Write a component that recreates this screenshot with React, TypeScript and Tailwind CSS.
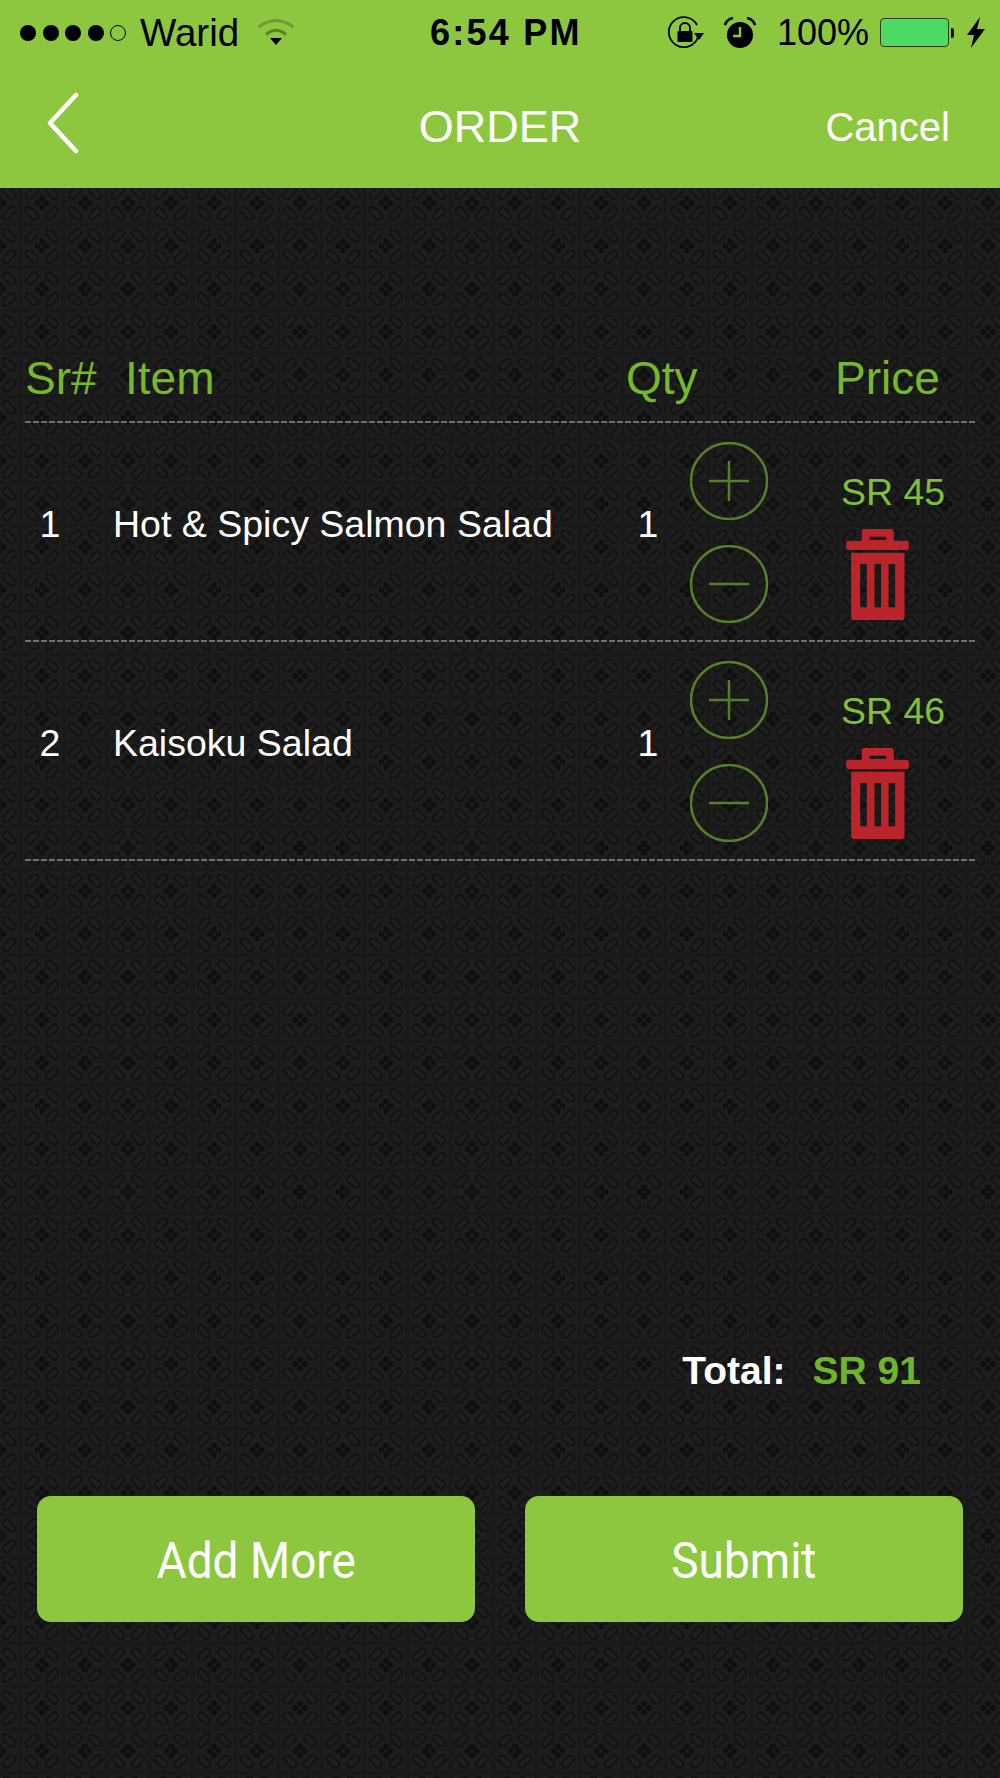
import React from 'react';

const items = [
  { sr: 1, name: 'Hot & Spicy Salmon Salad', qty: 1, price: 'SR 45' },
  { sr: 2, name: 'Kaisoku Salad', qty: 1, price: 'SR 46' },
];

const Dashed = () => (
  <div className="h-[2px] bg-[repeating-linear-gradient(90deg,#6e6e6e_0_6px,transparent_6px_8px)]" />
);

const capsules = [
  { x: 11.5, y: 11, r: 45 },
  { x: 31.5, y: 11, r: -45 },
  { x: 11.5, y: 32, r: -45 },
  { x: 31.5, y: 32, r: 45 },
];

// dark lattice behind the content, one 43px tile repeated
const Pattern = () => (
  <svg className="absolute inset-0 w-full h-full" aria-hidden="true">
    <defs>
      <pattern id="lattice" x="20.5" y="36.5" width="43" height="43" patternUnits="userSpaceOnUse">
        <rect width="43" height="43" fill="#1d1d1d" />
        <path d="M0 0H43M0 43H43M0 0V43M43 0V43" stroke="#131313" strokeWidth="3" fill="none" />
        <path d="M0 0H43M0 43H43M0 0V43M43 0V43" stroke="#1e1e1e" strokeWidth="1" fill="none" />
        <g fill="#0f0f0f">
          <circle cx="21.5" cy="17" r="3" />
          <circle cx="21.5" cy="26" r="3" />
          <circle cx="17" cy="21.5" r="3" />
          <circle cx="26" cy="21.5" r="3" />
        </g>
        {capsules.map((c) => (
          <rect
            key={`${c.x}-${c.y}`}
            x={c.x - 3.5}
            y={c.y - 7.5}
            width="7"
            height="15"
            rx="3.5"
            fill="#1e1e1e"
            stroke="#111111"
            strokeWidth="2"
            transform={`rotate(${c.r} ${c.x} ${c.y})`}
          />
        ))}
      </pattern>
    </defs>
    <rect width="100%" height="100%" fill="url(#lattice)" />
  </svg>
);

const Trash = () => (
  <svg viewBox="620 327 188 273" className="w-[63px] h-[91px] block" fill="#b9252b">
    <path
      fillRule="evenodd"
      d="M675 327H755Q763 327 763 335V362H801Q808 362 808 369V383Q808 390 801 390H627Q620 390 620 383V369Q620 362 627 362H667V335Q667 327 675 327ZM690 350V360H740V350Z"
    />
    <path
      fillRule="evenodd"
      d="M635 398H795V590Q795 600 785 600H645Q635 600 635 590ZM662 432V562H682V432ZM705 432V562H725V432ZM747 432V562H767V432Z"
    />
  </svg>
);

const RoundButton = ({ minus }: { minus?: boolean }) => (
  <svg viewBox="0 0 78 78" className="w-[78px] h-[78px] block" fill="none" stroke="#55802a">
    <circle cx="39" cy="39" r="38" strokeWidth="2.5" />
    <path d={minus ? 'M19 39H59' : 'M19 39H59M39 19V59'} strokeWidth="2.5" />
  </svg>
);

const StatusBar = () => (
  <div className="h-[62px] flex items-center pl-[20px] pr-[15px] pt-[3px] text-black">
    <div className="flex items-center gap-[6.5px]">
      <span className="w-[16px] h-[16px] rounded-full bg-black" />
      <span className="w-[16px] h-[16px] rounded-full bg-black" />
      <span className="w-[16px] h-[16px] rounded-full bg-black" />
      <span className="w-[16px] h-[16px] rounded-full bg-black" />
      <span className="w-[16px] h-[16px] rounded-full border-[1.5px] border-black" />
    </div>
    <span className="ml-[14px] text-[38.5px] leading-[44px]">Warid</span>
    <svg viewBox="0 0 38 28" className="ml-[18px] mb-[4px] w-[38px] h-[28px]" fill="none" strokeWidth="3">
      <path d="M1.5 10Q19 -3 36.5 10" stroke="#6f9a33" />
      <path d="M9 17.5Q19 9 29 17.5" stroke="#5c8029" />
      <path d="M13 21H25L19 28Z" fill="#000" />
    </svg>
    <span className="ml-[135px] text-[36px] leading-[44px] font-bold tracking-[2.2px]">6:54 PM</span>
    <div className="ml-auto flex items-center">
      <svg viewBox="0 0 36 34" className="w-[36px] h-[34px]" fill="none" stroke="#000" strokeWidth="1.8">
        <path d="M30 21A15 15 0 1 1 29 9" />
        <path d="M36 17H26L31 24Z" fill="#000" stroke="none" />
        <path d="M12 15V12A5 5 0 0 1 22 12V15" strokeWidth="2" />
        <rect x="9.5" y="15" width="15" height="11" rx="1" fill="#000" stroke="none" />
      </svg>
      <svg viewBox="0 0 32 32" className="ml-[20px] w-[32px] h-[32px]">
        <circle cx="16" cy="18" r="13" fill="#000" />
        <path d="M16 10V19H9" fill="none" stroke="#8dc63f" strokeWidth="2.5" />
        <path d="M1 8Q3 2 9 1M31 8Q29 2 23 1" fill="none" stroke="#000" strokeWidth="2.5" />
      </svg>
      <span className="ml-[21px] text-[36px] leading-[44px]">100%</span>
      <div className="ml-[11px] flex items-center">
        <div className="w-[69px] h-[29px] rounded-[4px] border-[1.5px] border-[#2b3a10] p-[1px]">
          <div className="w-full h-full rounded-[2px] bg-[#4cd964]" />
        </div>
        <span className="ml-[2px] w-[3px] h-[10px] rounded-r-[2px] bg-[#111]" />
      </div>
      <svg viewBox="0 0 18 31" className="ml-[13px] w-[18px] h-[31px]" fill="#000">
        <path d="M13 0L0 18H7L4 31L18 12H10Z" />
      </svg>
    </div>
  </div>
);

const NavBar = () => (
  <div className="h-[126px] grid grid-cols-3 items-center text-white">
    <svg viewBox="0 0 36 62" className="ml-[45px] mb-[4px] w-[36px] h-[62px]" fill="none" stroke="#fff" strokeWidth="4.5" strokeLinecap="round" strokeLinejoin="round">
      <path d="M31 3L5 31L31 59" />
    </svg>
    <div className="pt-[4px] text-center text-[45px] leading-[52px]">ORDER</div>
    <div className="pt-[4px] text-right pr-[50px] text-[40px] leading-[48px]">Cancel</div>
  </div>
);

const OrderRow = ({ sr, name, qty, price }: (typeof items)[number]) => (
  <div>
    <div className="h-[217px] flex text-white text-[37.5px]">
      <div className="w-[50px] self-center mb-[16px] text-center leading-[44px]">{sr}</div>
      <div className="ml-[38px] flex-1 self-center mb-[16px] leading-[44px]">{name}</div>
      <div className="w-[40px] self-center mb-[16px] text-center leading-[44px]">{qty}</div>
      <div className="ml-[22px] w-[78px] pt-[19px] flex flex-col gap-[25px]">
        <RoundButton />
        <RoundButton minus />
      </div>
      <div className="w-[207px] pl-[73px] pt-[47px]">
        <div className="text-[#7fbf3a] text-[37.5px] leading-[44px] whitespace-nowrap">{price}</div>
        <div className="ml-[5px] mt-[15px]">
          <Trash />
        </div>
      </div>
    </div>
    <Dashed />
  </div>
);

export default function App() {
  return (
    <div className="w-[1000px] h-[1778px] flex flex-col overflow-hidden font-['Liberation_Sans',sans-serif]">
      <div className="bg-[#8dc73f] h-[188px] shrink-0">
        <StatusBar />
        <NavBar />
      </div>

      <div className="relative flex-1">
        <Pattern />
        <div className="relative px-[25px] pt-[164px]">
          <div className="h-[69px] flex text-[#76b82a] text-[46px] leading-[52px]">
            <span className="w-[100px]">Sr#</span>
            <span className="flex-1">Item</span>
            <span className="w-[209px]">Qty</span>
            <span className="w-[140px]">Price</span>
          </div>
          <Dashed />
          {items.map((item) => (
            <OrderRow key={item.sr} {...item} />
          ))}

          <div className="mt-[488px] h-[44px] flex justify-end items-center pr-[54px] gap-[27px] font-bold text-[39px]">
            <span className="text-white">Total:</span>
            <span className="text-[#6fb52c]">SR 91</span>
          </div>

          <div className="mt-[103px] mx-[12px] grid grid-cols-2 gap-[50px]">
            <button className="h-[126px] pt-[4px] rounded-[14px] bg-[#8dc73f] text-white font-['Roboto',sans-serif] text-[50px]">
              <span className="inline-block scale-x-[0.92]">Add More</span>
            </button>
            <button className="h-[126px] pt-[4px] rounded-[14px] bg-[#8dc73f] text-white font-['Roboto',sans-serif] text-[50px]">
              <span className="inline-block scale-x-[0.92]">Submit</span>
            </button>
          </div>
        </div>
      </div>
    </div>
  );
}
